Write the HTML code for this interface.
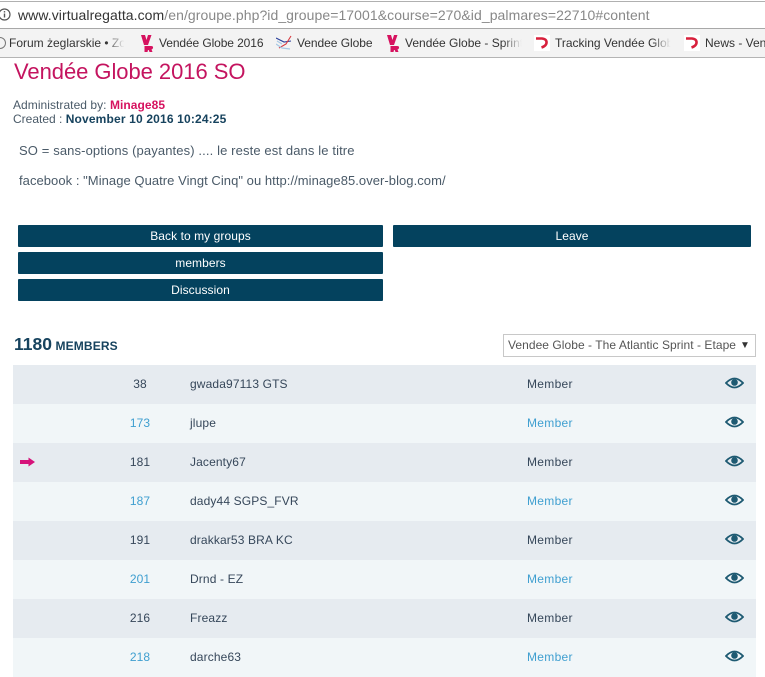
<!DOCTYPE html>
<html><head><meta charset="utf-8">
<style>
html,body{margin:0;padding:0;background:#fff}
body{width:765px;height:669px;position:relative;overflow:hidden;font-family:"Liberation Sans",sans-serif;font-size:12px;color:#4a5a68}
.a{position:absolute;white-space:nowrap}
.bm{position:absolute;top:36px;font-size:12px;color:#333;line-height:14px;white-space:nowrap}
.f{position:absolute;top:30px;height:26px;width:22px;background:linear-gradient(90deg,rgba(243,243,243,0),#f3f3f3 85%)}
.btn{position:absolute;height:22px;line-height:22px;background:#04425e;color:#fff;text-align:center;font-size:12px;border-radius:1px;letter-spacing:.07px}
.row{position:absolute;left:13px;width:743px;height:39px;line-height:39px;font-size:12px;color:#36475a}
.row span{position:absolute;white-space:nowrap}
.o{background:#e6ebf0}.e{background:#f1f6f8}
.n{left:99px;width:56px;text-align:center;letter-spacing:.05px}
.u{left:177px;letter-spacing:.13px}.r{left:514px;letter-spacing:.3px}
.e .n,.e .r{color:#3f9fd0}
.row svg{position:absolute;left:712px;top:11px}
</style></head><body>
<div class="a" style="left:0;top:1px;width:765px;height:1px;background:#b0b0b0"></div>
<div class="a" style="left:0;top:28px;width:765px;height:1px;background:#a8a8a8"></div>
<div class="a" style="left:0;top:29px;width:765px;height:28px;background:#f3f3f3"></div>
<div class="a" style="left:0;top:57px;width:765px;height:1px;background:#b4b4b4"></div>
<svg class="a" style="left:0;top:8px" width="12" height="14" viewBox="0 0 12 14"><circle cx="4.500" cy="6.500" r="5.500" fill="none" stroke="#555" stroke-width="1.200"/><rect x="3.800" y="5.500" width="1.400" height="4" fill="#555"/><rect x="3.800" y="3.100" width="1.400" height="1.400" fill="#555"/></svg>
<div class="a" style="left:18px;top:7px;font-size:14px;line-height:17px;color:#888;letter-spacing:.07px"><span style="color:#333">www.virtualregatta.com</span>/en/groupe.php?id_groupe=17001&amp;course=270&amp;id_palmares=22710#content</div>

<svg class="a" style="left:0;top:36px" width="6" height="14"><circle cx="0" cy="7" r="5.500" fill="none" stroke="#777"/></svg>
<div class="bm" style="left:9px;width:115px;overflow:hidden">Forum żeglarskie • Zo</div><div class="f" style="left:106px"></div>
<svg class="a" style="left:141px;top:35px" width="13" height="17" viewBox="0 0 13 17"><path d="M0 0h4l1.500 5L7 0h3.500L7 10H3z" fill="#d6125f"/><path d="M3.500 11H10q2.500 0 2 2-.3 1.200-1.500 1.500l1 2.500H8.500l-.8-2H7l-.5 2h-3z" fill="#d6125f"/></svg>
<div class="bm" style="left:159px;letter-spacing:-.1px">Vendée Globe 2016</div>
<svg class="a" style="left:276px;top:35px" width="16" height="16" viewBox="0 0 16 16"><path d="M0 3l8 4 7-1" fill="none" stroke="#2a3f9a" stroke-width="1.100"/><path d="M3 13l7-4 5-8" fill="none" stroke="#d8383e" stroke-width="1.100"/><path d="M0 9l6 4 8 1M1 6l5 3" fill="none" stroke="#a8c8e4" stroke-width="1.200"/></svg>
<div class="bm" style="left:297px;letter-spacing:-.05px">Vendee Globe</div>
<svg class="a" style="left:387px;top:35px" width="13" height="17" viewBox="0 0 13 17"><path d="M0 0h4l1.500 5L7 0h3.500L7 10H3z" fill="#d6125f"/><path d="M3.500 11H10q2.500 0 2 2-.3 1.200-1.500 1.500l1 2.500H8.500l-.8-2H7l-.5 2h-3z" fill="#d6125f"/></svg>
<div class="bm" style="left:405px;width:118px;overflow:hidden">Vendée Globe - Sprint</div><div class="f" style="left:503px"></div>
<svg class="a" style="left:534px;top:35px" width="16" height="16"><rect width="16" height="16" fill="#fff"/><path d="M2 3.500h6q5 .5 4.500 4.500-.5 3-5 4.500" fill="none" stroke="#d8203c" stroke-width="2.600"/></svg>
<div class="bm" style="left:555px;width:117px;overflow:hidden">Tracking Vendée Glob</div><div class="f" style="left:652px"></div>
<svg class="a" style="left:684px;top:35px" width="16" height="16"><rect width="16" height="16" fill="#fff"/><path d="M2 3.500h6q5 .5 4.500 4.500-.5 3-5 4.500" fill="none" stroke="#d8203c" stroke-width="2.600"/></svg>
<div class="bm" style="left:705px">News - Ven</div>

<div class="a" style="left:14px;top:59px;font-size:22px;line-height:26px;color:#c4145f;letter-spacing:-.05px">Vendée Globe 2016 SO</div>
<div class="a" style="left:13px;top:98px;line-height:14px;letter-spacing:.05px">Administrated by: <b style="color:#d6125f">Minage85</b></div>
<div class="a" style="left:13px;top:112px;line-height:14px">Created : <b style="color:#17435e;letter-spacing:.16px">November 10 2016 10:24:25</b></div>
<div class="a" style="left:19px;top:143px;font-size:13px;line-height:15px;letter-spacing:.12px">SO = sans-options (payantes) .... le reste est dans le titre</div>
<div class="a" style="left:19px;top:173px;font-size:13px;line-height:15px;letter-spacing:.05px">facebook : "Minage Quatre Vingt Cinq" ou http://minage85.over-blog.com/</div>

<div class="btn" style="left:18px;top:225px;width:365px">Back to my groups</div>
<div class="btn" style="left:393px;top:225px;width:358px">Leave</div>
<div class="btn" style="left:18px;top:252px;width:365px">members</div>
<div class="btn" style="left:18px;top:279px;width:365px">Discussion</div>

<div class="a" style="left:14px;top:333px;line-height:22px;font-weight:bold;color:#17435e;font-size:12px;letter-spacing:.15px"><span style="font-size:17.500px;letter-spacing:0">1180</span> MEMBERS</div>
<div class="a" style="left:503px;top:334px;width:251px;height:21px;border:1px solid #c8c8c8;line-height:21px;background:#fff;color:#555;overflow:hidden"><span class="a" style="left:4px;top:0;width:229px;overflow:hidden;letter-spacing:.05px">Vendee Globe - The Atlantic Sprint - Etape 1</span><span class="a" style="left:236px;top:0;font-size:10px;color:#333">▼</span></div>

<div class="row o" style="top:365px"><span class="n">38</span><span class="u">gwada97113 GTS</span><span class="r">Member</span><svg width="19" height="14" viewBox="0 0 19 14"><path d="M1 7Q9.500-2 18 7 9.500 16 1 7z" fill="none" stroke="#1e5a72" stroke-width="1.800"/><circle cx="9.500" cy="6.500" r="3.300" fill="#1e5a72"/></svg></div>
<div class="row e" style="top:404px"><span class="n">173</span><span class="u">jlupe</span><span class="r">Member</span><svg width="19" height="14" viewBox="0 0 19 14"><path d="M1 7Q9.500-2 18 7 9.500 16 1 7z" fill="none" stroke="#1e5a72" stroke-width="1.800"/><circle cx="9.500" cy="6.500" r="3.300" fill="#1e5a72"/></svg></div>
<div class="row o" style="top:443px"><svg style="left:7px;top:14px" width="15" height="10" viewBox="0 0 15 10"><path d="M0 3h8.500V.5L15 5 8.500 9.500V7H0z" fill="#d6127a"/></svg><span class="n">181</span><span class="u">Jacenty67</span><span class="r">Member</span><svg width="19" height="14" viewBox="0 0 19 14"><path d="M1 7Q9.500-2 18 7 9.500 16 1 7z" fill="none" stroke="#1e5a72" stroke-width="1.800"/><circle cx="9.500" cy="6.500" r="3.300" fill="#1e5a72"/></svg></div>
<div class="row e" style="top:482px"><span class="n">187</span><span class="u">dady44 SGPS_FVR</span><span class="r">Member</span><svg width="19" height="14" viewBox="0 0 19 14"><path d="M1 7Q9.500-2 18 7 9.500 16 1 7z" fill="none" stroke="#1e5a72" stroke-width="1.800"/><circle cx="9.500" cy="6.500" r="3.300" fill="#1e5a72"/></svg></div>
<div class="row o" style="top:521px"><span class="n">191</span><span class="u">drakkar53 BRA KC</span><span class="r">Member</span><svg width="19" height="14" viewBox="0 0 19 14"><path d="M1 7Q9.500-2 18 7 9.500 16 1 7z" fill="none" stroke="#1e5a72" stroke-width="1.800"/><circle cx="9.500" cy="6.500" r="3.300" fill="#1e5a72"/></svg></div>
<div class="row e" style="top:560px"><span class="n">201</span><span class="u">Drnd - EZ</span><span class="r">Member</span><svg width="19" height="14" viewBox="0 0 19 14"><path d="M1 7Q9.500-2 18 7 9.500 16 1 7z" fill="none" stroke="#1e5a72" stroke-width="1.800"/><circle cx="9.500" cy="6.500" r="3.300" fill="#1e5a72"/></svg></div>
<div class="row o" style="top:599px"><span class="n">216</span><span class="u">Freazz</span><span class="r">Member</span><svg width="19" height="14" viewBox="0 0 19 14"><path d="M1 7Q9.500-2 18 7 9.500 16 1 7z" fill="none" stroke="#1e5a72" stroke-width="1.800"/><circle cx="9.500" cy="6.500" r="3.300" fill="#1e5a72"/></svg></div>
<div class="row e" style="top:638px"><span class="n">218</span><span class="u">darche63</span><span class="r">Member</span><svg width="19" height="14" viewBox="0 0 19 14"><path d="M1 7Q9.500-2 18 7 9.500 16 1 7z" fill="none" stroke="#1e5a72" stroke-width="1.800"/><circle cx="9.500" cy="6.500" r="3.300" fill="#1e5a72"/></svg></div>
</body></html>
